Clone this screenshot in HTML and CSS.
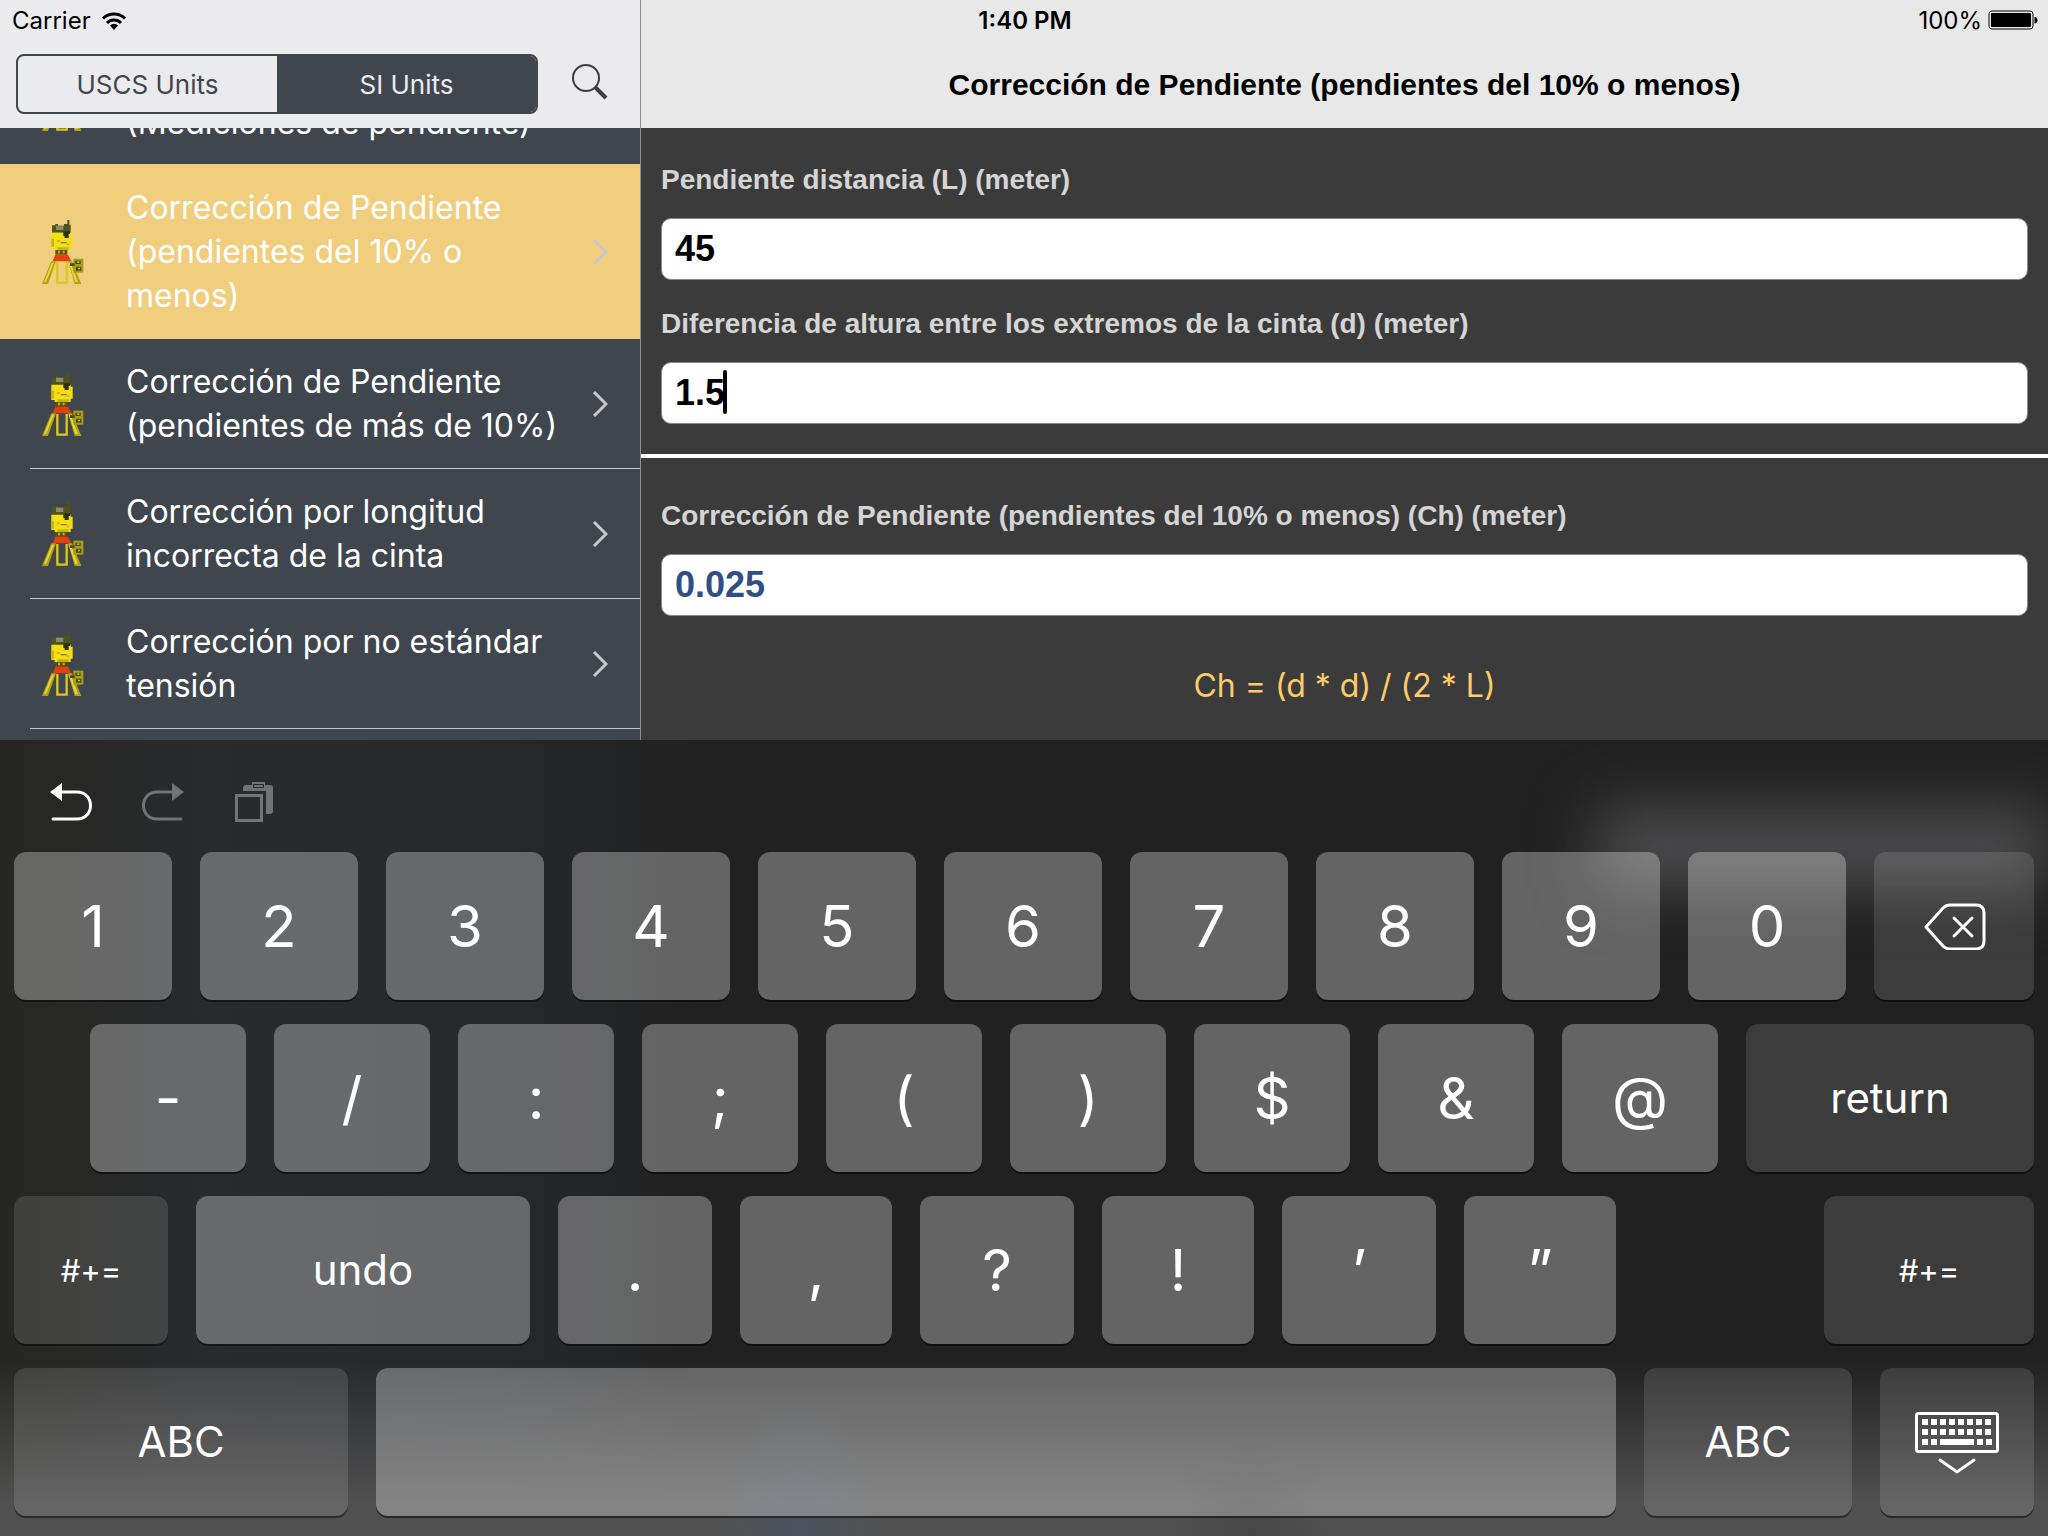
FILE: index.html
```html
<!DOCTYPE html>
<html lang="es">
<head>
    <meta charset="UTF-8">
    <meta name="viewport" content="width=device-width, initial-scale=1.0">
    <title>Corrección de Pendiente</title>
    <link rel="stylesheet" href="styles.css">
</head>
<body>
    <!-- shared icons -->
    <svg class="sprite" aria-hidden="true">
        <symbol id="surveyor" viewBox="0 0 126 192">
            <path fill="#4d531f" d="M30 16h10v-4h8v5h18v-5h10V0h6v14h4v24H30z"/>
            <path fill="#8a8b6a" d="M42 17h22v13H42z"/>
            <path fill="#f2e014" d="M28 38h58v6h6v36h-6v10H38v-6H28z"/>
            <path fill="#c9b414" d="M28 56h8v24h-8zM46 82h34v8H46z"/>
            <path fill="#2f2f0c" d="M64 34h20v8h-4v12H68v-6h-4z"/>
            <path fill="#8a7a10" d="M56 66h18v4H56z"/>
            <path fill="#f7a51c" d="M44 60h10v6H44zM74 70h8v6h-8z"/>
            <path fill="#5a4f10" d="M40 90h36v14H40z"/>
            <path fill="#c9b414" d="M48 92h6v8h-6zM62 92h6v8h-6z"/>
            <path fill="#e2400c" d="M40 104h38l10 20H32z"/>
            <path fill="#b5a01a" d="M28 124h14L18 192H0z"/>
            <path fill="#e8d832" d="M30 128h6L12 186H6z"/>
            <path fill="none" stroke="#d9c81e" stroke-width="7" d="M46 126v62h28v-62"/>
            <path fill="#b5a01a" d="M78 124h12l28 68H98z"/>
            <path fill="#e8d832" d="M80 128h6l22 58h-8z"/>
            <path fill="#a89c1c" d="M94 116h30v42H94z"/>
            <path fill="#4a4a0e" d="M100 122h16v10h-16zM84 130h14v8H84zM102 140h16v12h-16z"/>
            <path fill="#d9c81e" d="M106 124h6v5h-6zM108 143h6v5h-6z"/>
        </symbol>
        <symbol id="chevron" viewBox="0 0 16 26">
            <path fill="none" stroke="#c7c7cc" stroke-width="3" d="M2 1l12 12L2 25"/>
        </symbol>
    </svg>

    <div class="app">
        <div class="status-bar">
            <span class="carrier">Carrier
                <svg width="26" height="19" viewBox="0 0 26 19" aria-hidden="true">
                    <path fill="none" stroke="#000" stroke-width="3" d="M2 7.500a15.500 15.500 0 0 1 22 0"/>
                    <path fill="none" stroke="#000" stroke-width="3" d="M6 12a9.800 9.800 0 0 1 14 0"/>
                    <path d="M13 19l-4-4.500a5.500 5.500 0 0 1 8 0z"/>
                </svg>
            </span>
            <span class="time">1:40 PM</span>
            <span class="battery">100%
                <svg width="50" height="20" viewBox="0 0 50 20" aria-hidden="true">
                    <rect x="1" y="1" width="44" height="18" rx="3" fill="none" stroke="#000"/>
                    <rect x="3" y="3" width="40" height="14" rx="1"/>
                    <path d="M46.500 7c4 0 4 6.500 0 6.500z"/>
                </svg>
            </span>
        </div>

        <div class="split">
            <aside class="sidebar">
                <div class="sidebar-head">
                    <div class="segments">
                        <button class="segment" type="button">USCS Units</button>
                        <button class="segment active" type="button">SI Units</button>
                    </div>
                    <button class="search" type="button" aria-label="Buscar">
                        <svg width="36" height="36" viewBox="0 0 36 36">
                            <circle cx="14" cy="14" r="13" fill="none" stroke="#3d3d40" stroke-width="2"/>
                            <path stroke="#3d3d40" stroke-width="4" d="M23 23l11 11"/>
                        </svg>
                    </button>
                </div>
                <ul class="menu">
                    <li class="row cut">
                        <svg class="thumb"><use href="#surveyor"/></svg>
                        <a class="name" href="#">(Mediciones de pendiente)</a>
                    </li>
                    <li class="row selected">
                        <svg class="thumb"><use href="#surveyor"/></svg>
                        <a class="name" href="#">Corrección de Pendiente (pendientes del 10% o menos)</a>
                        <svg class="arrow"><use href="#chevron"/></svg>
                    </li>
                    <li class="row">
                        <svg class="thumb"><use href="#surveyor"/></svg>
                        <a class="name" href="#">Corrección de Pendiente (pendientes de más de 10%)</a>
                        <svg class="arrow"><use href="#chevron"/></svg>
                    </li>
                    <li class="row">
                        <svg class="thumb"><use href="#surveyor"/></svg>
                        <a class="name" href="#">Corrección por longitud incorrecta de la cinta</a>
                        <svg class="arrow"><use href="#chevron"/></svg>
                    </li>
                    <li class="row">
                        <svg class="thumb"><use href="#surveyor"/></svg>
                        <a class="name" href="#">Corrección por no estándar tensión</a>
                        <svg class="arrow"><use href="#chevron"/></svg>
                    </li>
                </ul>
            </aside>

            <main class="detail">
                <h1 class="title">Corrección de Pendiente (pendientes del 10% o menos)</h1>
                <form class="inputs">
                    <label for="distance">Pendiente distancia (L) (meter)</label>
                    <input id="distance" type="text" value="45">
                    <label for="height">Diferencia de altura entre los extremos de la cinta (d) (meter)</label>
                    <div class="editing">
                        <input id="height" type="text" value="1.5">
                        <span class="caret"></span>
                    </div>
                </form>
                <div class="results">
                    <label for="result">Corrección de Pendiente (pendientes del 10% o menos) (Ch) (meter)</label>
                    <input id="result" class="result" type="text" value="0.025" readonly>
                    <p class="formula">Ch = (d * d) / (2 * L)</p>
                </div>
            </main>
        </div>

        <div class="keyboard">
            <div class="tools">
                <button type="button" aria-label="Deshacer">
                    <svg width="44" height="40" viewBox="0 0 44 40">
                        <path fill="#fff" d="M1 10L13 1v18z"/>
                        <path fill="none" stroke="#fff" stroke-width="3" stroke-linecap="round" d="M12 10h16c18 0 18 27 0 27H4"/>
                    </svg>
                </button>
                <button type="button" aria-label="Rehacer">
                    <svg width="44" height="40" viewBox="0 0 44 40">
                        <path fill="#727375" d="M43 10L31 1v18z"/>
                        <path fill="none" stroke="#727375" stroke-width="3" stroke-linecap="round" d="M32 10H16c-18 0-18 27 0 27h24"/>
                    </svg>
                </button>
                <button type="button" aria-label="Pegar">
                    <svg width="44" height="40" viewBox="0 0 44 40">
                        <path fill="#727375" d="M10 9V6q0-3 3-3h6V0h13v3h5q3 0 3 3v23q0 3-3 3h-4V9z"/>
                        <path fill="none" stroke="#26282b" stroke-width="1" d="M20.500 2.500h10v3h-10z"/>
                        <path fill="none" stroke="#727375" stroke-width="3" d="M3.500 13.500h25v25h-25z"/>
                    </svg>
                </button>
            </div>

            <div class="keys digits">
                <button class="key">1</button>
                <button class="key">2</button>
                <button class="key">3</button>
                <button class="key">4</button>
                <button class="key">5</button>
                <button class="key">6</button>
                <button class="key">7</button>
                <button class="key">8</button>
                <button class="key">9</button>
                <button class="key">0</button>
                <button class="key dark" aria-label="Borrar">
                    <svg width="64" height="48" viewBox="0 0 64 48">
                        <path fill="none" stroke="#fff" stroke-width="3" stroke-linejoin="round" d="M4 25L21 6q3-3 7-3h26q8 0 8 8v28q0 8-8 8H28q-4 0-7-3z"/>
                        <path stroke="#fff" stroke-width="3" stroke-linecap="round" d="M32 16l18 18M50 16L32 34"/>
                    </svg>
                </button>
            </div>

            <div class="keys symbols">
                <button class="key">-</button>
                <button class="key">/</button>
                <button class="key">:</button>
                <button class="key">;</button>
                <button class="key">(</button>
                <button class="key">)</button>
                <button class="key">$</button>
                <button class="key">&amp;</button>
                <button class="key">@</button>
                <button class="key dark word">return</button>
            </div>

            <div class="keys marks">
                <button class="key dark shift">#+=</button>
                <button class="key word">undo</button>
                <button class="key">.</button>
                <button class="key">,</button>
                <button class="key">?</button>
                <button class="key">!</button>
                <button class="key">’</button>
                <button class="key">”</button>
                <span></span>
                <button class="key dark shift">#+=</button>
            </div>

            <div class="keys bottom">
                <button class="key dark word">ABC</button>
                <button class="key" aria-label="Espacio"></button>
                <button class="key dark word">ABC</button>
                <button class="key dark" aria-label="Ocultar teclado">
                    <svg width="84" height="64" viewBox="0 0 84 64">
                        <rect x="1.500" y="3.500" width="81" height="38" rx="2" fill="none" stroke="#fff" stroke-width="3"/>
                        <path stroke="#fff" stroke-width="6" stroke-dasharray="6 3" d="M7 12h70M7 22h70"/>
                        <path stroke="#fff" stroke-width="6" d="M7 32h6M16 32h6M25 32h34M62 32h6M71 32h6"/>
                        <path fill="none" stroke="#fff" stroke-width="3" stroke-linecap="round" d="M25 50l17 12 17-12"/>
                    </svg>
                </button>
            </div>
        </div>
    </div>
</body>
</html>
```
FILE: styles.css
```css
* {
    box-sizing: border-box;
}
body {
    margin: 0;
    font-family: Inter, "Liberation Sans", sans-serif;
    background-color: #212121;
}
button {
    margin: 0;
    padding: 0;
    border: none;
    background: none;
    font-family: inherit;
    color: inherit;
}
svg {
    display: block;
}
.sprite {
    display: none;
}
.app {
    display: flex;
    flex-direction: column;
    height: 100vh;
    overflow: hidden;
}

/* status bar lies over both panes */
.status-bar {
    position: absolute;
    top: 0;
    left: 0;
    right: 0;
    display: grid;
    grid-template-columns: 1fr auto 1fr;
    align-items: center;
    height: 40px;
    padding: 0 10px 0 12px;
    font-size: 24px;
    color: #000;
}
.carrier, .battery {
    display: flex;
    align-items: center;
    gap: 10px;
}
.battery {
    justify-content: flex-end;
    gap: 6px;
}
.time {
    font-weight: 600;
}

.split {
    display: flex;
    flex: 1;
    min-height: 0;
}
.sidebar {
    flex: 0 0 641px;
    overflow: hidden;
    border-right: 1px solid #8e8e93;
    background-color: #40464e;
}
.sidebar-head {
    display: flex;
    align-items: center;
    gap: 34px;
    height: 128px;
    padding: 40px 16px 0;
    background-color: #ebebed;
}
.segments {
    display: flex;
    width: 522px;
    height: 60px;
    border: 2px solid #40464e;
    border-radius: 8px;
    overflow: hidden;
}
.segment {
    flex: 1;
    font-size: 26px;
    color: #40464e;
}
.segment.active {
    background-color: #40464e;
    color: #ebebed;
}
.search {
    padding-bottom: 4px;
}
.menu {
    margin: 0;
    padding: 0;
    list-style: none;
}
.row {
    display: flex;
    align-items: center;
    height: 130px;
    padding-left: 42px;
    padding-right: 32px;
    background: linear-gradient(#c8c7cc, #c8c7cc) 30px 100% / 100% 1px no-repeat;
}
.row.selected {
    height: 175px;
    background: #f0ce7e;
}
.row.cut {
    align-items: flex-end;
    height: 36px;
    padding-bottom: 19px;
    background: none;
    overflow: hidden;
}
.row.cut .thumb {
    margin-bottom: 14px;
}
.thumb {
    flex: none;
    width: 42px;
    height: 64px;
    margin-right: 42px;
}
.name {
    flex: 1;
    padding-right: 20px;
    font-size: 32px;
    line-height: 44px;
    color: #fff;
    text-decoration: none;
}
.arrow {
    flex: none;
    width: 16px;
    height: 26px;
}

.detail {
    flex: 1;
    overflow: hidden;
    font-family: "Liberation Sans", Arial, sans-serif;
    background-color: #3b3b3b;
}
.title {
    height: 128px;
    margin: 0;
    padding-top: 40px;
    background-color: #e8e8e8;
    font-size: 30px;
    line-height: 90px;
    text-align: center;
}
.inputs, .results {
    display: flex;
    flex-direction: column;
    padding: 22px 20px 30px;
}
.inputs {
    border-bottom: 4px solid #fff;
}
.results {
    padding-top: 28px;
}
.detail label {
    height: 68px;
    font-size: 28px;
    font-weight: bold;
    line-height: 60px;
    color: #d5d5d5;
}
.detail input {
    width: 100%;
    height: 62px;
    margin-bottom: 14px;
    padding: 0 13px;
    border: 1px solid #8a8a8a;
    border-radius: 10px;
    background-color: #fff;
    font-family: inherit;
    font-size: 36px;
    font-weight: bold;
    color: #000;
}
.detail .editing input {
    display: block;
    margin-bottom: 0;
}
.detail .result {
    color: #304f87;
}
.editing {
    position: relative;
}
.caret {
    position: absolute;
    top: 8px;
    left: 62px;
    width: 4px;
    height: 44px;
    border-radius: 2px;
    background-color: #000;
}
.formula {
    margin: 34px 0 0;
    font-family: Inter, sans-serif;
    font-size: 32px;
    line-height: 44px;
    text-align: center;
    color: #fccb6c;
}

.keyboard {
    position: relative;
    display: flex;
    flex-direction: column;
    gap: 24px;
    overflow: hidden;
    padding: 0 14px 20px;
    background:
        radial-gradient(80px 140px at 39% 100%, rgba(60, 85, 120, 0.3), transparent),
        radial-gradient(80px 120px at 61% 100%, rgba(50, 50, 50, 0.3), transparent),
        linear-gradient(transparent 78%, #505050 96%),
        linear-gradient(90deg, #262622, #292a2d 10%, #26282c 24%, #212121 34%);
    color: #fff;
}
/* light coming through the top right corner */
.keyboard::before {
    content: "";
    position: absolute;
    top: 68px;
    left: 78%;
    right: 0;
    height: 80px;
    background-color: #4c4c4e;
    filter: blur(30px);
}
.tools {
    display: flex;
    gap: 48px;
    height: 88px;
    padding: 42px 35px 0;
}
.tools button {
    height: 40px;
}
.keys {
    position: relative;
    display: grid;
    grid-auto-rows: 148px;
    gap: 28px;
}
.digits {
    grid-template-columns: repeat(10, 158fr) 160fr;
}
.symbols {
    grid-template-columns: repeat(9, 156fr) 288fr;
    padding-left: 76px;
}
.marks {
    grid-template-columns: 154fr 334fr repeat(3, 154fr 152fr) 152fr 210fr;
}
.bottom {
    grid-template-columns: 334fr 1240fr 208fr 154fr;
}
.key {
    display: flex;
    align-items: center;
    justify-content: center;
    min-width: 0;
    border-radius: 12px;
    background-color: rgba(255, 255, 255, 0.3);
    box-shadow: 0 2px 0 rgba(0, 0, 0, 0.5);
    font-size: 58px;
}
.key.dark {
    background-color: rgba(255, 255, 255, 0.12);
}
.key.word {
    padding-bottom: 2px;
    font-size: 42px;
}
.key.shift {
    font-size: 31px;
}
```
